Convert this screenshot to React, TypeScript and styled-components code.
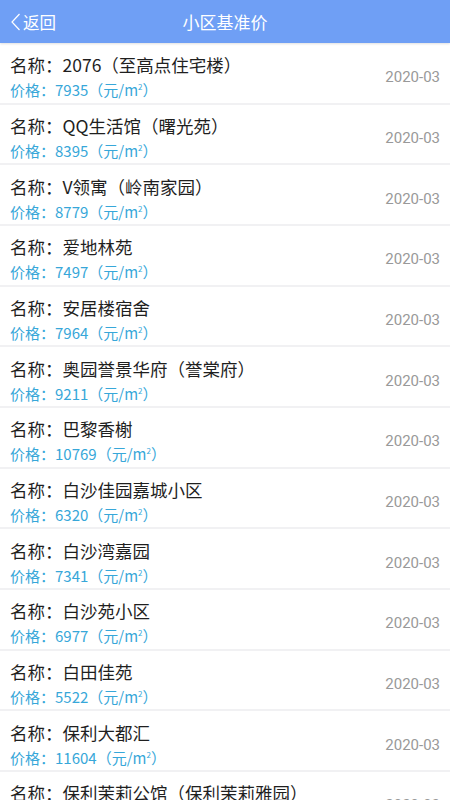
import styled, { createGlobalStyle } from 'styled-components';

const items = [
  { name: '2076（至高点住宅楼）', price: '7935' },
  { name: 'QQ生活馆（曙光苑）', price: '8395' },
  { name: 'V领寓（岭南家园）', price: '8779' },
  { name: '爱地林苑', price: '7497' },
  { name: '安居楼宿舍', price: '7964' },
  { name: '奥园誉景华府（誉棠府）', price: '9211' },
  { name: '巴黎香榭', price: '10769' },
  { name: '白沙佳园嘉城小区', price: '6320' },
  { name: '白沙湾嘉园', price: '7341' },
  { name: '白沙苑小区', price: '6977' },
  { name: '白田佳苑', price: '5522' },
  { name: '保利大都汇', price: '11604' },
  { name: '保利茉莉公馆（保利茉莉雅园）', price: '8650' },
];

export default function App() {
  return (
    <Page>
      <GlobalStyle />
      <Header>
        <Back>
          <svg width="13" height="20" viewBox="0 0 13 20">
            <path d="M10.5 2 L3 10 L10.5 18" fill="none" stroke="#fff" strokeWidth="1.2" />
          </svg>
          返回
        </Back>
        <Title>小区基准价</Title>
      </Header>
      <List>
        {items.map((item) => (
          <Row key={item.name}>
            <Info>
              <Name>名称：{item.name}</Name>
              <Price>
                价格：{item.price}（元/m<sup>2</sup>）
              </Price>
            </Info>
            <DateText>2020-03</DateText>
          </Row>
        ))}
      </List>
    </Page>
  );
}

const GlobalStyle = createGlobalStyle`
  body {
    margin: 0;
    background: #ffffff;
    font-family: "Noto Sans CJK SC", "Noto Sans", sans-serif;
  }
`;

const Page = styled.div`
  width: 450px;
  height: 800px;
  overflow: hidden;
  background: #fff;
`;

const Header = styled.div`
  height: 43px;
  background: #6f9ff5;
  display: grid;
  grid-template-columns: 1fr auto 1fr;
  align-items: center;
  color: #fff;
  box-shadow: 0 1px 2px rgba(0, 0, 0, 0.12);
  position: relative;
`;

const Back = styled.div`
  display: flex;
  align-items: center;
  gap: 1px;
  padding-left: 9px;
  font-size: 16.5px;
`;

const Title = styled.div`
  font-size: 17px;
`;

const List = styled.div`
  display: flex;
  flex-direction: column;
  padding-top: 1px;
`;

const Row = styled.div`
  box-sizing: border-box;
  height: 60.67px;
  border-bottom: 2px solid #f1f1f3;
  display: flex;
  align-items: center;
  justify-content: space-between;
  padding: 8px 10px 0 10px;
`;

const Info = styled.div`
  display: flex;
  flex-direction: column;
  gap: 1px;
`;

const Name = styled.div`
  font-size: 17.5px;
  color: #1f1f1f;
  line-height: 22px;
`;

const Price = styled.div`
  font-size: 15px;
  color: #37a7d9;
  line-height: 20px;
  sup {
    font-size: 8px;
    vertical-align: 6px;
  }
`;

const DateText = styled.div`
  font-family: "Roboto", "Noto Sans", sans-serif;
  font-size: 15px;
  color: #999;
`;
